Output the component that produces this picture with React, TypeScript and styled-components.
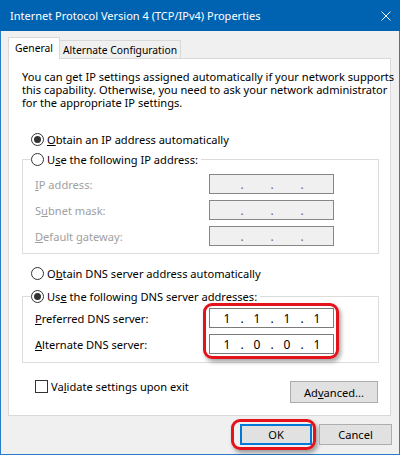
import React from 'react';
import styled, { createGlobalStyle } from 'styled-components';

const GlobalStyle = createGlobalStyle`
  html, body {
    margin: 0;
    padding: 0;
    background: #f0f0f0;
  }
  body {
    font-family: 'Noto Sans', 'Open Sans', sans-serif;
    font-size: 11.1px;
    color: #000;
  }
  * {
    box-sizing: border-box;
  }
`;

const Window = styled.div`
  width: 400px;
  height: 455px;
  display: flex;
  flex-direction: column;
  border: 1px solid #2a7bc8;
  border-top: none;
  background: #f0f0f0;
`;

const TitleBar = styled.div`
  height: 31px;
  flex-shrink: 0;
  background: #0063b1;
  color: #fff;
  display: flex;
  align-items: center;
  justify-content: space-between;
  padding: 0 9px 0 10px;
  margin: 0 -1px;
  font-size: 11px;
`;

const Body = styled.div`
  flex: 1;
  display: flex;
  flex-direction: column;
  padding: 6px 8px 0 7px;
`;

const TabStrip = styled.div`
  display: flex;
  align-items: flex-end;
  height: 21px;
  position: relative;
  z-index: 1;
`;

const Tab = styled.div<{ $active?: boolean; $width: number }>`
  width: ${(p) => p.$width}px;
  height: ${(p) => (p.$active ? 22 : 18)}px;
  margin-bottom: ${(p) => (p.$active ? -1 : 0)}px;
  background: ${(p) => (p.$active ? '#fff' : '#f0f0f0')};
  border: 1px solid #d9d9d9;
  border-bottom: none;
  border-left: ${(p) => (p.$active ? '1px solid #d9d9d9' : 'none')};
  display: flex;
  align-items: center;
  justify-content: center;
  white-space: nowrap;
  font-size: 10.3px;
  padding-bottom: ${(p) => (p.$active ? 2 : 0)}px;
`;

const Panel = styled.div`
  height: 358px;
  background: #fff;
  border: 1px solid #d9d9d9;
  padding: 11px 11px 0 13px;
  display: flex;
  flex-direction: column;
`;

const Description = styled.p`
  margin: 0;
  line-height: 13px;
  white-space: nowrap;
`;

const OptionRow = styled.label<{ $mt?: number }>`
  display: flex;
  align-items: center;
  gap: 3px;
  height: 15px;
  padding-left: 9px;
  margin-top: ${(p) => p.$mt ?? 0}px;
  white-space: nowrap;
`;

const Radio = styled.span<{ $checked?: boolean }>`
  width: 13px;
  height: 13px;
  flex-shrink: 0;
  border-radius: 50%;
  border: 1px solid #333;
  background: #fff;
  display: flex;
  align-items: center;
  justify-content: center;
  &::after {
    content: '';
    width: 7px;
    height: 7px;
    border-radius: 50%;
    background: ${(p) => (p.$checked ? '#333' : 'transparent')};
  }
`;

const CheckBox = styled.span`
  width: 13px;
  height: 13px;
  flex-shrink: 0;
  border: 1px solid #333;
  background: #fff;
`;

const Key = styled.span`
  text-decoration: underline;
`;

const Group = styled.fieldset<{ $mt: number; $pt: number; $pb: number }>`
  margin: ${(p) => p.$mt}px 0 0;
  padding: ${(p) => p.$pt}px 0 ${(p) => p.$pb}px 8px;
  border: 1px solid #dcdcdc;
  min-width: 0;
`;

const Legend = styled.legend`
  padding: 0 3px 0 0;
  & > label {
    padding-left: 0;
  }
`;

const FieldArea = styled.div`
  display: flex;
  padding-left: 4px;
`;

const LabelStack = styled.div`
  width: 174px;
  display: flex;
  flex-direction: column;
  gap: 6px;
`;

const BoxStack = styled.div`
  position: relative;
  display: flex;
  flex-direction: column;
  gap: 6px;
`;

const FieldLabel = styled.div<{ $disabled?: boolean }>`
  height: 20px;
  display: flex;
  align-items: center;
  color: ${(p) => (p.$disabled ? '#a0a0a0' : '#000')};
`;

const IpBox = styled.div<{ $disabled?: boolean }>`
  width: 125px;
  height: 20px;
  border: 1px solid ${(p) => (p.$disabled ? '#868686' : '#7a7a7a')};
  background: ${(p) => (p.$disabled ? '#f0f0f0' : '#fff')};
  color: ${(p) => (p.$disabled ? '#6d6d6d' : '#000')};
  display: flex;
  align-items: center;
  padding-left: 5px;
  font-size: 12px;
`;

const Octet = styled.span`
  width: 24px;
  text-align: center;
`;

const Dot = styled.span`
  width: 6px;
  text-align: center;
`;

const Highlight = styled.div<{ $inset: string }>`
  position: absolute;
  inset: ${(p) => p.$inset};
  border: 3px solid #e3121b;
  border-radius: 9px;
  box-shadow: 2px 3px 4px rgba(0, 0, 0, 0.35);
  pointer-events: none;
`;

const BottomRow = styled.div`
  display: flex;
  justify-content: space-between;
  align-items: flex-start;
  margin-top: 16px;
  padding-right: 1px;
`;

const CheckRow = styled.label`
  display: flex;
  align-items: center;
  gap: 3px;
  height: 15px;
  padding-left: 13px;
`;

const Button = styled.button<{ $width: number; $default?: boolean }>`
  width: ${(p) => p.$width}px;
  height: 21px;
  padding: 0;
  font: inherit;
  color: #000;
  background: #e1e1e1;
  border: ${(p) => (p.$default ? '2px solid #0078d7' : '1px solid #adadad')};
`;

const AdvancedButton = styled(Button)`
  height: 22px;
  margin-top: 2px;
`;

const ButtonSlot = styled.div`
  position: relative;
  display: flex;
`;

const Footer = styled.div`
  display: flex;
  justify-content: flex-end;
  gap: 7px;
  padding-top: 8px;
  margin-right: -1px;
`;

const ip = (value: string[] | null, disabled?: boolean) => (
  <IpBox $disabled={disabled}>
    {[0, 1, 2, 3].map((i) => (
      <React.Fragment key={i}>
        <Octet>{value ? value[i] : ''}</Octet>
        {i < 3 && <Dot>.</Dot>}
      </React.Fragment>
    ))}
  </IpBox>
);

const App: React.FC = () => {
  return (
    <>
      <GlobalStyle />
      <Window>
        <TitleBar>
          <span>Internet Protocol Version 4 (TCP/IPv4) Properties</span>
          <svg width="10" height="10" viewBox="0 0 10 10">
            <path d="M0.5 0.5 L9.5 9.5 M9.5 0.5 L0.5 9.5" stroke="#fff" strokeWidth="1" />
          </svg>
        </TitleBar>
        <Body>
          <TabStrip>
            <Tab $active $width={52}>General</Tab>
            <Tab $width={121}>Alternate Configuration</Tab>
          </TabStrip>
          <Panel>
            <Description>
              You can get IP settings assigned automatically if your network supports
              <br />
              this capability. Otherwise, you need to ask your network administrator
              <br />
              for the appropriate IP settings.
            </Description>

            <OptionRow $mt={23}>
              <Radio $checked />
              <span><Key>O</Key>btain an IP address automatically</span>
            </OptionRow>

            <Group $mt={5} $pt={7} $pb={7}>
              <Legend>
                <OptionRow>
                  <Radio />
                  <span>U<Key>s</Key>e the following IP address:</span>
                </OptionRow>
              </Legend>
              <FieldArea>
                <LabelStack>
                  <FieldLabel $disabled><span><Key>I</Key>P address:</span></FieldLabel>
                  <FieldLabel $disabled><span>S<Key>u</Key>bnet mask:</span></FieldLabel>
                  <FieldLabel $disabled><span><Key>D</Key>efault gateway:</span></FieldLabel>
                </LabelStack>
                <BoxStack>
                  {ip(null, true)}
                  {ip(null, true)}
                  {ip(null, true)}
                </BoxStack>
              </FieldArea>
            </Group>

            <OptionRow $mt={12}>
              <Radio />
              <span>O<Key>b</Key>tain DNS server address automatically</span>
            </OptionRow>

            <Group $mt={8} $pt={4} $pb={8}>
              <Legend>
                <OptionRow>
                  <Radio $checked />
                  <span>Us<Key>e</Key> the following DNS server addresses:</span>
                </OptionRow>
              </Legend>
              <FieldArea>
                <LabelStack>
                  <FieldLabel><span><Key>P</Key>referred DNS server:</span></FieldLabel>
                  <FieldLabel><span><Key>A</Key>lternate DNS server:</span></FieldLabel>
                </LabelStack>
                <BoxStack>
                  {ip(['1', '1', '1', '1'])}
                  {ip(['1', '0', '0', '1'])}
                  <Highlight $inset="-5px -5px -5px -6px" />
                </BoxStack>
              </FieldArea>
            </Group>

            <BottomRow>
              <CheckRow>
                <CheckBox />
                <span>Va<Key>l</Key>idate settings upon exit</span>
              </CheckRow>
              <AdvancedButton $width={88}>Ad<Key>v</Key>anced...</AdvancedButton>
            </BottomRow>
          </Panel>
          <Footer>
            <ButtonSlot>
              <Button $width={72} $default>OK</Button>
              <Highlight $inset="-5px -4px -5px -9px" />
            </ButtonSlot>
            <ButtonSlot>
              <Button $width={73}>Cancel</Button>
            </ButtonSlot>
          </Footer>
        </Body>
      </Window>
    </>
  );
};

export default App;
